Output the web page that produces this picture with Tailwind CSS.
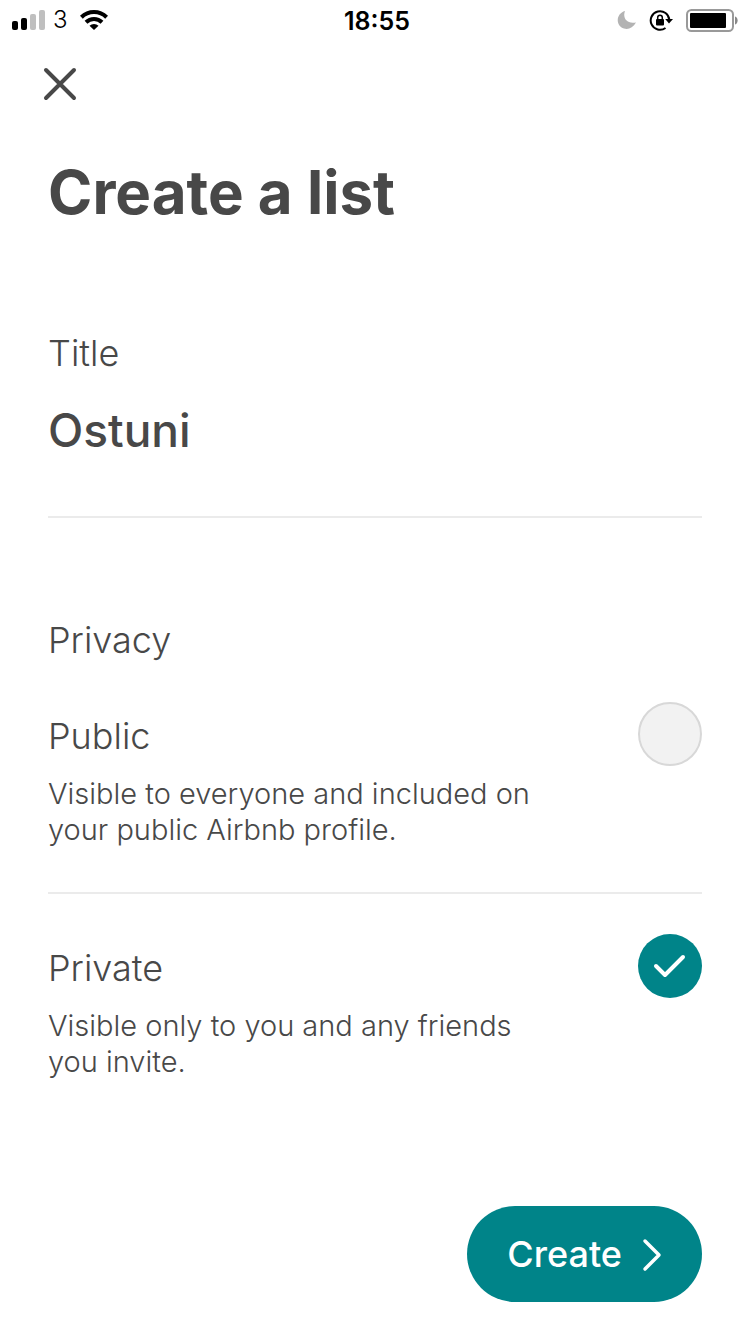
<!DOCTYPE html>
<html lang="en">
<head>
<meta charset="utf-8">
<meta name="viewport" content="width=device-width, initial-scale=1">
<title>Create a list</title>
<script src="https://cdn.jsdelivr.net/npm/@tailwindcss/browser@4"></script>
</head>
<body class="min-h-screen bg-white font-['Inter','Liberation_Sans',sans-serif] text-[#484848]">
<div class="flex min-h-screen flex-col">
  <header class="grid h-10 grid-cols-[1fr_auto_1fr] items-center px-3 text-black">
    <div class="flex items-center gap-2">
      <svg class="h-5 w-[33px]" viewBox="0 0 33 20" aria-hidden="true">
        <rect x="0" y="11" width="6" height="9" rx="2"/>
        <rect x="9" y="8" width="6" height="12" rx="2"/>
        <rect x="18" y="4" width="6" height="16" rx="2" fill="#bfbfbf"/>
        <rect x="27" y="0" width="6" height="20" rx="2" fill="#bfbfbf"/>
      </svg>
      <span class="text-2xl leading-6 font-light">3</span>
      <svg class="ml-1 h-5 w-7" viewBox="0 0 28 20" aria-hidden="true">
        <g fill="none" stroke="#000" stroke-width="4">
          <path d="M1.400 7.200 A18 18 0 0 1 26.600 7.200"/>
          <path d="M6 12.200 A11.500 11.500 0 0 1 22 12.200"/>
        </g>
        <path d="M14 20 L9.500 15.800 A6.500 6.500 0 0 1 18.500 15.800 Z"/>
      </svg>
    </div>
    <time class="pt-0.5 pl-1 text-center text-[25px] leading-6 font-semibold">18:55</time>
    <div class="flex items-center justify-end">
      <svg class="mr-3 h-5 w-5" viewBox="0 0 20 20" aria-hidden="true">
        <path d="M8 1 C5.500 7 9 14.500 19 12.500 C16 18 11 20 7 18.500 C-2 15.500 -1 3.500 8 1 Z" fill="#b3b3b3"/>
      </svg>
      <svg class="mr-3 h-6 w-6" viewBox="0 0 24 24" aria-hidden="true">
        <path d="M16.500 20 A9.300 9.300 0 1 1 20.300 12" fill="none" stroke="#000" stroke-width="2"/>
        <path d="M16.200 11 H24 L20 15.500 Z"/>
        <rect x="7" y="11" width="8" height="6.500" rx="1"/>
        <path d="M8.700 11.500 V9.500 A2.300 2.300 0 0 1 13.300 9.500 V11.500" fill="none" stroke="#000" stroke-width="1.500"/>
      </svg>
      <svg class="h-6 w-[53px]" viewBox="0 0 53 24" aria-hidden="true">
        <rect x="2" y="2" width="46" height="21" rx="4.500" fill="none" stroke="#999" stroke-width="2"/>
        <rect x="5" y="5" width="36" height="15" rx="1"/>
        <path d="M50 8.500 C53.500 9.500 53.500 15.500 50 16.500 Z" fill="#888"/>
      </svg>
    </div>
  </header>

  <form class="flex flex-1 flex-col">
    <div class="px-9 pt-5">
      <button type="button" aria-label="Close" class="flex size-12 items-center justify-center">
        <svg class="size-9" viewBox="0 0 36 36" fill="none" stroke="#484848" stroke-width="4" stroke-linecap="round" aria-hidden="true"><path d="M4 4 32 32M32 4 4 32"/></svg>
      </button>
    </div>

    <main class="px-12 pt-12">
      <h1 class="text-[60px] leading-[72px] font-bold">Create a list</h1>

      <div class="border-b-2 border-[#ebebeb] pt-[101px] pb-[54px]">
        <label for="title" class="block text-4xl leading-12 font-light">Title</label>
        <input id="title" type="text" value="Ostuni" class="mt-[21px] block h-16 w-full text-[46px] leading-16 font-medium outline-none">
      </div>

      <fieldset>
        <legend class="pt-[98px] text-4xl leading-12 font-light">Privacy</legend>
        <div class="flex items-start justify-between border-b-2 border-[#ebebeb] pt-[38px] pb-11">
          <label for="public" class="w-[500px] font-light">
            <span class="block pt-[10px] text-4xl leading-12">Public</span>
            <span class="mt-4 block text-[29px] leading-9">Visible to everyone and included on your public Airbnb profile.</span>
          </label>
          <input id="public" type="radio" name="privacy" class="size-16 appearance-none rounded-full border-2 border-[#d8d8d8] bg-[#f2f2f2]">
        </div>
        <div class="flex items-start justify-between pt-10">
          <label for="private" class="w-[500px] font-light">
            <span class="block pt-[10px] text-4xl leading-12">Private</span>
            <span class="mt-4 block text-[29px] leading-9">Visible only to you and any friends you invite.</span>
          </label>
          <div class="grid">
            <input id="private" type="radio" name="privacy" checked class="col-start-1 row-start-1 size-16 appearance-none rounded-full bg-[#008489]">
            <svg class="pointer-events-none col-start-1 row-start-1 size-16" viewBox="0 0 64 64" fill="none" stroke="#fff" stroke-width="4" stroke-linecap="round" stroke-linejoin="round" aria-hidden="true"><path d="M18 32 27 41 45 23"/></svg>
          </div>
        </div>
      </fieldset>
    </main>

    <footer class="mt-auto flex justify-end px-12 pb-8">
      <button type="submit" class="flex h-24 items-center gap-4 rounded-full bg-[#008489] px-10 text-4xl font-medium text-white">
        Create
        <svg class="h-9 w-6" viewBox="0 0 24 36" fill="none" stroke="#fff" stroke-width="3.500" stroke-linecap="round" stroke-linejoin="round" aria-hidden="true"><path d="M7 5 21 19 7 33"/></svg>
      </button>
    </footer>
  </form>
</div>
</body>
</html>
